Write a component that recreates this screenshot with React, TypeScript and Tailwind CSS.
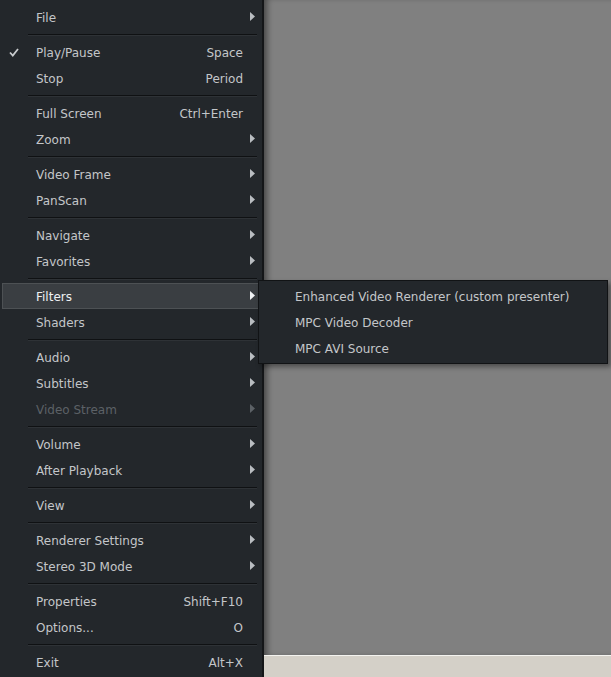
import React from 'react';

type Item =
  | { type: 'sep' }
  | {
      type: 'item';
      label: string;
      shortcut?: string;
      sub?: boolean;
      checked?: boolean;
      disabled?: boolean;
      active?: boolean;
    };

const sep: Item = { type: 'sep' };

const menu: Item[] = [
  { type: 'item', label: 'File', sub: true },
  sep,
  { type: 'item', label: 'Play/Pause', shortcut: 'Space', checked: true },
  { type: 'item', label: 'Stop', shortcut: 'Period' },
  sep,
  { type: 'item', label: 'Full Screen', shortcut: 'Ctrl+Enter' },
  { type: 'item', label: 'Zoom', sub: true },
  sep,
  { type: 'item', label: 'Video Frame', sub: true },
  { type: 'item', label: 'PanScan', sub: true },
  sep,
  { type: 'item', label: 'Navigate', sub: true },
  { type: 'item', label: 'Favorites', sub: true },
  sep,
  { type: 'item', label: 'Filters', sub: true, active: true },
  { type: 'item', label: 'Shaders', sub: true },
  sep,
  { type: 'item', label: 'Audio', sub: true },
  { type: 'item', label: 'Subtitles', sub: true },
  { type: 'item', label: 'Video Stream', sub: true, disabled: true },
  sep,
  { type: 'item', label: 'Volume', sub: true },
  { type: 'item', label: 'After Playback', sub: true },
  sep,
  { type: 'item', label: 'View', sub: true },
  sep,
  { type: 'item', label: 'Renderer Settings', sub: true },
  { type: 'item', label: 'Stereo 3D Mode', sub: true },
  sep,
  { type: 'item', label: 'Properties', shortcut: 'Shift+F10' },
  { type: 'item', label: 'Options...', shortcut: 'O' },
  sep,
  { type: 'item', label: 'Exit', shortcut: 'Alt+X' },
];

const filters = [
  'Enhanced Video Renderer (custom presenter)',
  'MPC Video Decoder',
  'MPC AVI Source',
];

const Arrow = ({ color }: { color: string }) => (
  <svg width="5" height="9" viewBox="0 0 5 9" className="absolute left-[250px] top-[8px]">
    <polygon points="0,0 5,4.5 0,9" fill={color} />
  </svg>
);

const Check = () => (
  <svg width="10" height="9" viewBox="0 0 10 9" className="absolute left-[9px] top-[9px]">
    <path d="M1 4.5 L3.8 7.5 L9 1" stroke="#c8cbce" strokeWidth="1.8" fill="none" />
  </svg>
);

const MenuRow = ({ item }: { item: Item }) => {
  if (item.type === 'sep') {
    return (
      <div className="h-[9px] flex flex-col justify-center pl-[28px] pr-[5px]">
        <div className="h-px bg-[#0f1113]" />
        <div className="h-px bg-[#2e3236]" />
      </div>
    );
  }
  const text = item.disabled ? 'text-[#5c6166]' : item.active ? 'text-[#eef0f2]' : 'text-[#c3c6c9]';
  return (
    <div
      className={`relative h-[26px] flex items-center ${
        item.active ? 'mx-[2px] bg-[#3a3e42] border border-[#4d5154]' : ''
      }`}
    >
      {item.checked && <Check />}
      <span className={`absolute translate-y-[1px] ${item.active ? 'left-[33px]' : 'left-[36px]'} ${text}`}>
        {item.label}
      </span>
      {item.shortcut && (
        <span className={`absolute translate-y-[1px] right-[19px] ${text}`}>{item.shortcut}</span>
      )}
      {item.sub && (
        <span className={`absolute ${item.active ? '-left-[3px] top-[-1px]' : 'left-0 top-0'}`}>
          <Arrow color={item.disabled ? '#5c6166' : item.active ? '#f0f2f4' : '#b9bdc1'} />
        </span>
      )}
    </div>
  );
};

export default function App() {
  return (
    <div
      className="relative w-[611px] h-[677px] flex overflow-hidden text-[12px] leading-none"
      style={{ fontFamily: '"DejaVu Sans", Verdana, sans-serif' }}
    >
      <div className="w-[264px] h-full shrink-0 bg-[#23272b] border-r-2 border-[#141618] pt-[4px] flex flex-col">
        {menu.map((item, i) => (
          <MenuRow key={i} item={item} />
        ))}
      </div>
      <div className="flex-1 flex flex-col">
        <div className="flex-1 bg-[#808080] shadow-[inset_6px_0_6px_-3px_rgba(0,0,0,0.45)]" />
        <div className="h-px bg-[#f4f3ef]" />
        <div className="h-[21px] bg-[#d4d0c8]" />
      </div>

      <div className="absolute left-[258px] top-[280px] w-[350px] h-[84px] bg-[#23272b] border border-[#111315] pt-[2px] shadow-[3px_3px_5px_rgba(0,0,0,0.4)]">
        {filters.map((f) => (
          <div key={f} className="h-[26px] flex items-center pl-[36px] pt-[2px] text-[#c3c6c9]">
            {f}
          </div>
        ))}
      </div>
    </div>
  );
}
